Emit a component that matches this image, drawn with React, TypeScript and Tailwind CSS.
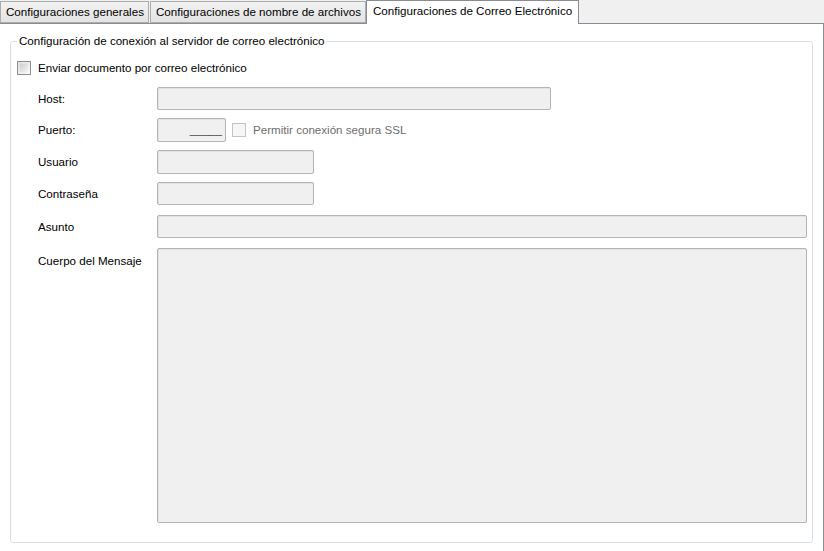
import React from 'react';

const font = { fontFamily: '"Liberation Sans", Arial, sans-serif' };

function Tab({ label, active, className }: { label: string; active?: boolean; className?: string }) {
  if (active) {
    return (
      <div className={`relative z-10 h-[24px] bg-white border border-b-0 border-[#898c95] flex items-start pt-[3px] ${className ?? ''}`}>
        <span className="whitespace-nowrap">{label}</span>
      </div>
    );
  }
  return (
    <div className={`mt-[1px] h-[22px] bg-gradient-to-b from-[#f2f2f2] to-[#e3e3e3] border border-[#acacac] flex items-center ${className ?? ''}`}>
      <span className="whitespace-nowrap">{label}</span>
    </div>
  );
}

function Box({ className }: { className?: string }) {
  return (
    <div className={`bg-[#f0f0f0] border border-[#b4b4b4] rounded-[2px] shadow-[inset_1px_1px_0_#e2e2e2] ${className ?? ''}`} />
  );
}

function Check({ disabled }: { disabled?: boolean }) {
  return (
    <div
      className={
        disabled
          ? 'w-[14px] h-[14px] border border-[#c3c3c3] bg-[#f6f6f6]'
          : 'w-[14px] h-[14px] border border-[#8e8f8f] bg-gradient-to-br from-[#dcdcdc] to-[#fbfbfb] p-[2px]'
      }
    >
      {!disabled && <div className="w-full h-full bg-gradient-to-br from-[#cfcfcf] to-[#f4f4f4]" />}
    </div>
  );
}

export default function App() {
  return (
    <div className="w-[824px] h-[551px] bg-[#f0f0f0] flex flex-col text-[11.6px] leading-[14px] text-black overflow-hidden" style={font}>
      {/* Tabs */}
      <div className="h-[23px] flex items-start shrink-0">
        <Tab label="Configuraciones generales" className="w-[149px] pl-[5px]" />
        <Tab label="Configuraciones de nombre de archivos" className="ml-[1px] w-[216px] pl-[5px]" />
        <Tab label="Configuraciones de Correo Electrónico" active className="w-[213px] pl-[6px]" />
      </div>

      {/* Panel */}
      <div className="flex-1 bg-white border-t border-r border-[#898c95] pt-[10px]">
        <fieldset className="ml-[10px] w-[803px] h-[509px] border border-[#d5dfe5] rounded-[3px]">
          <legend className="ml-[6px] px-[2px]">Configuración de conexión al servidor de correo electrónico</legend>

          <div className="mt-[13px] ml-[6px] flex items-center h-[14px]">
            <Check />
            <span className="ml-[7px]">Enviar documento por correo electrónico</span>
          </div>

          <div className="ml-[27px] flex flex-col">
            <div className="mt-[12px] flex items-center">
              <span className="w-[119px]">Host:</span>
              <Box className="w-[394px] h-[23px]" />
            </div>
            <div className="mt-[8px] flex items-center">
              <span className="w-[119px]">Puerto:</span>
              <div className="w-[69px] h-[24px] bg-[#f0f0f0] border border-[#b4b4b4] rounded-[2px] shadow-[inset_1px_1px_0_#e2e2e2] flex items-center justify-end pr-[3px] text-[#3c3c3c]">
                _____
              </div>
              <div className="ml-[6px]">
                <Check disabled />
              </div>
              <span className="ml-[7px] text-[#6d6d6d]">Permitir conexión segura SSL</span>
            </div>
            <div className="mt-[8px] flex items-center">
              <span className="w-[119px]">Usuario</span>
              <Box className="w-[157px] h-[24px]" />
            </div>
            <div className="mt-[8px] flex items-center">
              <span className="w-[119px]">Contraseña</span>
              <Box className="w-[157px] h-[23px]" />
            </div>
            <div className="mt-[10px] flex items-center">
              <span className="w-[119px]">Asunto</span>
              <Box className="w-[650px] h-[23px]" />
            </div>
            <div className="mt-[10px] flex items-start">
              <span className="w-[119px] pt-[6px]">Cuerpo del Mensaje</span>
              <Box className="w-[650px] h-[275px]" />
            </div>
          </div>
        </fieldset>
      </div>
    </div>
  );
}
